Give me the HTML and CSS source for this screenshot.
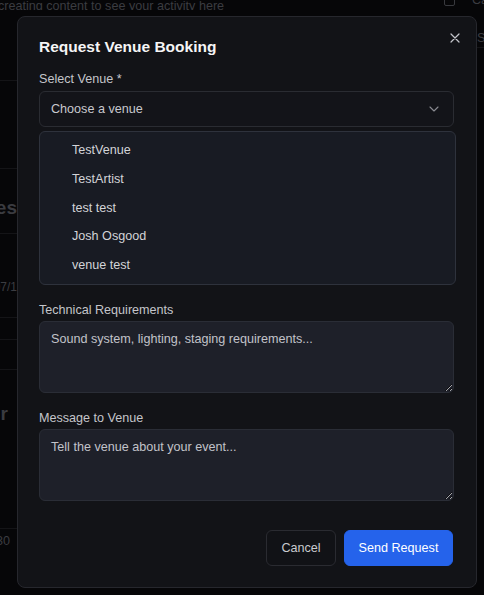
FILE: index.html
```html
<!DOCTYPE html>
<html lang="en">
<head>
<meta charset="utf-8">
<title>Request Venue Booking</title>
<link rel="stylesheet" href="styles.css">
</head>
<body>
<div class="bg">
  <div class="bg-top">
    <span class="bg-top-text">creating content to see your activity here</span>
    <span class="bg-top-right"><span class="bg-check"></span><span>Ca</span></span>
  </div>
  <div class="bg-cols">
    <div class="bg-left">
      <div class="bg-row r1"></div>
      <div class="bg-row r2"></div>
      <div class="bg-row r3"><span class="bg-big">Venues</span></div>
      <div class="bg-row r4"><span>07/1</span></div>
      <div class="bg-row r5"></div>
      <div class="bg-row r6"></div>
      <div class="bg-row r7"><span class="bg-big">r</span></div>
      <div class="bg-row r8"><span>30</span></div>
    </div>
    <div class="bg-mid"></div>
    <div class="bg-right">
      <div class="bg-row rr1"><span>Se</span></div>
      <div class="bg-row rr2"></div>
    </div>
  </div>
</div>

<div class="modal" role="dialog" aria-labelledby="modal-title">
  <button class="close" aria-label="Close">
    <svg width="10" height="10" viewBox="0 0 10 10"><path d="M1 1 L9 9 M9 1 L1 9" stroke="currentColor" stroke-width="1.2" stroke-linecap="round" fill="none"/></svg>
  </button>
  <h2 id="modal-title" class="title">Request Venue Booking</h2>

  <label class="label">Select Venue *</label>
  <div class="select-wrap">
    <div class="select">
      <span>Choose a venue</span>
      <svg class="chev" width="10" height="6" viewBox="0 0 10 6"><path d="M1 1 L5 5 L9 1" stroke="currentColor" stroke-width="1.1" fill="none" stroke-linecap="round" stroke-linejoin="round"/></svg>
    </div>
    <ul class="dropdown">
      <li>TestVenue</li>
      <li>TestArtist</li>
      <li>test test</li>
      <li>Josh Osgood</li>
      <li>venue test</li>
    </ul>
  </div>

  <div class="hidden-fields" aria-hidden="true">
    <div class="hf">
      <div class="input"></div>
    </div>
    <div class="hf">
      <div class="input"></div>
    </div>
  </div>

  <label class="label">Technical Requirements</label>
  <textarea class="ta" placeholder="Sound system, lighting, staging requirements..."></textarea>

  <label class="label label-gap">Message to Venue</label>
  <textarea class="ta" placeholder="Tell the venue about your event..."></textarea>

  <div class="actions">
    <button class="btn btn-cancel">Cancel</button>
    <button class="btn btn-primary">Send Request</button>
  </div>
</div>
</body>
</html>
```
FILE: styles.css
```css
* { box-sizing: border-box; }
html, body { margin: 0; padding: 0; }
body {
  width: 484px;
  height: 595px;
  overflow: hidden;
  background: #060608;
  font-family: "Liberation Sans", Arial, sans-serif;
  font-size: 12.6px;
  color: #c4c5ca;
  position: relative;
  color-scheme: dark;
}

/* background page (dimmed) */
.bg { color: #3b3c41; }
.bg-top {
  display: flex;
  justify-content: space-between;
  height: 14px;
  line-height: 18px;
  margin-top: -4px;
  white-space: nowrap;
  overflow: hidden;
}
.bg-top-text { margin-left: -2px; margin-top: 1px; font-size: 12.6px; }
.bg-top-right { display: flex; align-items: center; gap: 17px; margin-right: -4px; margin-top: -6px; }
.bg-check { width: 11px; height: 11px; border: 1px solid #38393e; border-radius: 2px; }
.bg-cols { display: flex; }
.bg-left { width: 17px; overflow: hidden; }
.bg-mid { flex: 1; }
.bg-right { width: 7px; overflow: hidden; }
.bg-row {
  display: flex;
  justify-content: flex-end;
  align-items: center;
  white-space: nowrap;
  border-bottom: 1px solid #141417;
}
.bg-big { font-size: 19px; font-weight: 700; color: #3a3b40; }
.r1 { height: 71px; }
.r2 { height: 88px; }
.r3 { height: 65px; padding-top: 13px; }
.r4 { height: 84px; align-items: flex-end; padding-bottom: 23px; font-size: 12px; }
.r5 { height: 22px; }
.r6 { height: 30px; }
.r7 { height: 159px; align-items: flex-start; padding-top: 33px; padding-right: 9px; }
.r8 { height: 40px; align-items: flex-start; padding-top: 5px; padding-right: 7px; border-bottom: none; font-size: 12.6px; }
.rr1 { height: 38px; justify-content: flex-start; align-items: flex-end; padding-bottom: 2px; }
.rr2 { height: 300px; border-bottom: none; }

/* modal */
.modal {
  position: absolute;
  left: 17px;
  top: 16px;
  width: 460px;
  background: #121317;
  border: 1px solid #26272d;
  border-radius: 8px;
  padding: 18px 22px 21px 21px;
  display: flex;
  flex-direction: column;
}
.close {
  position: absolute;
  top: 16px;
  right: 16px;
  width: 10px;
  height: 10px;
  padding: 0;
  border: 0;
  background: none;
  color: #c4c5cb;
  display: flex;
}
.title {
  margin: 0 0 11px;
  font-size: 15.5px;
  line-height: 24px;
  font-weight: 700;
  color: #f5f5f6;
}
.label {
  display: block;
  line-height: 18px;
  margin-bottom: 3px;
  color: #c4c5ca;
}
.label-gap { margin-top: 16px; }

.select-wrap { position: relative; }
.select {
  height: 36px;
  border: 1px solid #2a2c32;
  border-radius: 6px;
  background: #131419;
  display: flex;
  align-items: center;
  justify-content: space-between;
  padding: 0 14px 0 11px;
  color: #c8c9ce;
}
.chev { color: #8a8b91; }
.dropdown {
  position: absolute;
  top: 40px;
  left: 0;
  right: -2px;
  height: 154px;
  margin: 0;
  padding: 4px 0 2px;
  list-style: none;
  background: #181b23;
  border: 1px solid #2e323c;
  border-radius: 6px;
  z-index: 2;
}
.dropdown li {
  height: 28.8px;
  line-height: 28.8px;
  padding-left: 32px;
  color: #d3d4d8;
}

.hidden-fields {
  height: 174px;
  padding-top: 40px;
  display: flex;
  flex-direction: column;
  gap: 42px;
}
.input {
  height: 33px;
  border: 1px solid #2a2c32;
  border-radius: 6px;
  background: #131419;
}

.ta {
  display: block;
  width: 100%;
  height: 72px;
  margin-top: -1px;
  resize: vertical;
  background: #1e2029;
  border: 1px solid #2a2d36;
  border-radius: 6px;
  padding: 8px 11px;
  font-family: inherit;
  font-size: 12.6px;
  line-height: 18px;
  color: #d0d1d6;
  outline: none;
}
.ta::placeholder { color: #c2c3c9; opacity: 1; }

.actions {
  display: flex;
  justify-content: flex-end;
  gap: 8px;
  margin-top: 29px;
}
.btn {
  height: 36px;
  border-radius: 6px;
  font-family: inherit;
  font-size: 12.6px;
}
.btn-cancel {
  width: 70px;
  background: #111216;
  border: 1px solid #2a2b31;
  color: #c9cacf;
}
.btn-primary {
  width: 109px;
  background: #2563eb;
  border: 1px solid #2563eb;
  color: #ffffff;
  margin-right: 1px;
}
```
